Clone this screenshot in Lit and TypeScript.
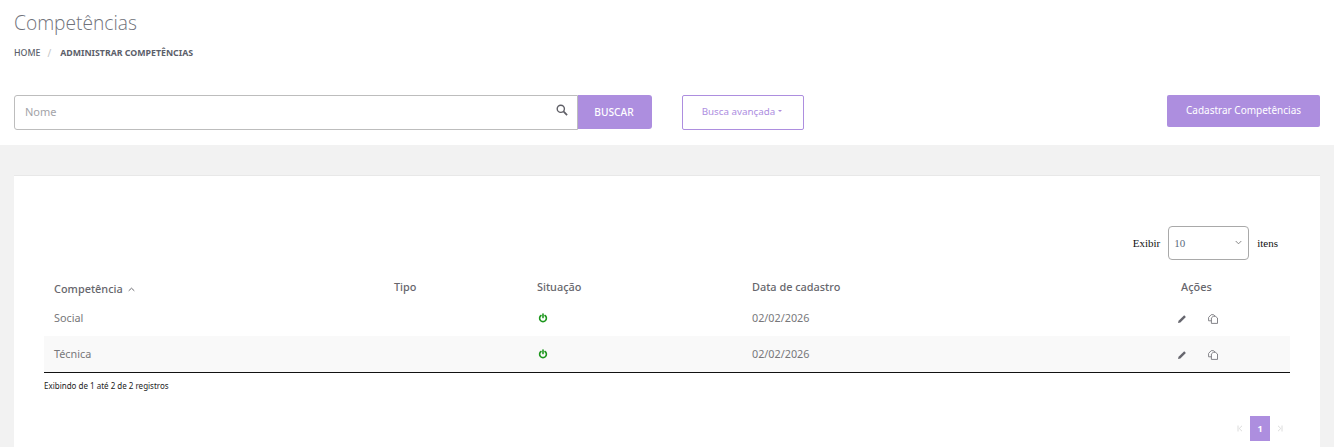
import { LitElement, html, css, svg } from "lit";
import { customElement } from "lit/decorators.js";

const power = svg`<svg class="ic pw" width="10" height="10" viewBox="0 0 10 10" fill="none" stroke="#1c961c" stroke-width="1.6" stroke-linecap="round"><path d="M3 2.5A3.4 3.4 0 1 0 7 2.5"/><path d="M5 1V4.6"/></svg>`;
const pencil = svg`<svg class="ic" width="10" height="10" viewBox="0 0 10 10"><path fill="#66666e" d="M7.2 1.2 8.9 2.9 3.4 8.5 1 9.1 1.6 6.8Z"/></svg>`;
const copy = svg`<svg class="ic" width="10" height="10" viewBox="0 0 10 10" fill="#fff" stroke="#77777d" stroke-width=".9"><path d="M.6 3.4 3.2.7H5.6L7 2.1V6.8H.6Z"/><path d="M3.4 3.9 5.2 2.3H7.4L9.5 4V9.4H3.4Z"/></svg>`;
const search = svg`<svg width="12" height="12" viewBox="0 0 13 13" fill="none" stroke="#5f5f66" stroke-width="1.5"><circle cx="5.2" cy="5.2" r="3.9"/><path stroke-width="1.9" d="M8.1 8.1 12 12"/></svg>`;
const first = svg`<svg width="6" height="7" viewBox="0 0 6 7" fill="none" stroke="#dcdcdc" stroke-width="1"><path d="M1 .5V6.5M5 .8 2.2 3.5 5 6.2"/></svg>`;
const last = svg`<svg width="6" height="7" viewBox="0 0 6 7" fill="none" stroke="#dcdcdc" stroke-width="1"><path d="M5 .5V6.5M1 .8 3.8 3.5 1 6.2"/></svg>`;

const rows = [
  ["Social", "", "02/02/2026"],
  ["Técnica", "", "02/02/2026"],
];

@customElement("app-root")
export class AppRoot extends LitElement {
  static styles = css`
    :host { display: block; height: 447px; overflow: hidden; background: #f2f2f2; font-family: "Noto Sans", sans-serif; color: #6b6b6b; }
    .top { background: #fff; height: 145px; padding: 0 14px; box-sizing: border-box; }
    h1 { margin: 0; padding-top: 10px; font: 300 19.2px/26px "Open Sans", sans-serif; color: #70727a; height: 36px; box-sizing: border-box; }
    .crumbs { display: flex; align-items: center; height: 14px; margin-top: 10px; font-size: 8.8px; font-weight: 500; color: #5c5f6b; }
    .crumbs .sep { margin: 0 9px 0 7px; color: #c4c4c4; font-size: 10px; font-weight: 400; }
    .crumbs b { font-weight: 700; }
    .tools { display: flex; align-items: flex-start; margin-top: 35px; }
    .search { display: flex; width: 564px; height: 35px; box-sizing: border-box; border: 1px solid #bdbdbd; border-radius: 3px 0 0 3px; align-items: center; padding: 0 9px 2px 10px; justify-content: space-between; }
    .ph { font-size: 11px; color: #a3a3a8; }
    .search svg { margin-top: -3px; }
    .buscar { width: 74px; height: 34px; padding-right: 2px; box-sizing: border-box; background: #ad8edf; color: #fff; font-size: 10.2px; font-weight: 500; display: flex; align-items: center; justify-content: center; border-radius: 0 3px 3px 0; }
    .adv { margin-left: 30px; width: 122px; height: 35px; box-sizing: border-box; border: 1px solid #ad8edf; border-radius: 2px; color: #ad8edf; font-size: 9.8px; display: flex; align-items: center; justify-content: center; gap: 3px; padding: 0 2px 3px 0; }
    .caret { width: 0; height: 0; border: 2.5px solid transparent; border-top-color: #ad8edf; border-bottom: 0; }
    .add { margin-left: auto; width: 153px; height: 32px; padding-bottom: 2px; box-sizing: border-box; background: #ad8edf; color: #fff; font-size: 10px; display: flex; align-items: center; justify-content: center; border-radius: 2px; }
    .card { margin: 30px 14px 0; height: 272px; box-sizing: border-box; background: #fff; border-top: 1px solid #e8e8e8; padding: 49px 30px 0; }
    .len { display: flex; justify-content: flex-end; align-items: center; font: 11px "Liberation Serif", serif; color: #111; height: 35px; padding-right: 12px; }
    .sel { width: 81px; height: 34px; box-sizing: border-box; border: 1px solid #a9a9a9; border-radius: 4px; margin: 0 8px; display: flex; align-items: center; justify-content: space-between; padding: 0 6px 0 5px; color: #5b6b80; }
    .grid { display: grid; grid-template-columns: 340px 143px 215px 429px 119px; margin-top: 10px; }
    .row { display: contents; }
    .c { height: 36px; display: flex; align-items: center; padding-left: 10px; padding-bottom: 2px; box-sizing: border-box; font-size: 10.8px; color: #77777a; }
    .h { height: 30px; padding-top: 3px; padding-bottom: 0; font-size: 10.9px; font-weight: 500; color: #66666c; }
    .h.first { padding-top: 7px; }
    .sort { margin-left: 5px; margin-top: 2px; }
    .alt .c { background: #f9f9f9; }
    .acts { gap: 21px; padding-left: 6px; padding-top: 4px; padding-bottom: 2px; }
    .ic { display: block; }
    .pw { margin-left: 1px; margin-top: 2px; }
    .rule { height: 1px; background: #111; }
    .info { font-size: 8px; color: #222; margin-top: 7px; height: 12px; line-height: 12px; }
    .pager { display: flex; justify-content: flex-end; align-items: center; margin-top: 24px; }
    .pager span { width: 20px; height: 25px; display: flex; align-items: center; justify-content: center; }
    .pager .on { background: #ad8edf; color: #fff; font-weight: 700; font-size: 9px; }
  `;
  render() {
    return html`
      <div class="top">
        <h1>Competências</h1>
        <div class="crumbs"><span>HOME</span><span class="sep">/</span><b>ADMINISTRAR COMPETÊNCIAS</b></div>
        <div class="tools">
          <div class="search"><span class="ph">Nome</span>${search}</div>
          <div class="buscar">BUSCAR</div>
          <div class="adv">Busca avançada <i class="caret"></i></div>
          <div class="add">Cadastrar Competências</div>
        </div>
      </div>
      <div class="card">
        <div class="len">Exibir <div class="sel"><span>10</span><svg width="7" height="5" viewBox="0 0 8 5" fill="none" stroke="#777" stroke-width="1"><path d="M.8.8 4 4 7.2.8"/></svg></div> itens</div>
        <div class="grid">
          <div class="c h first">Competência <svg class="sort" width="7" height="5" viewBox="0 0 8 5" fill="none" stroke="#66666c" stroke-width="1.1"><path d="M.8 4 4 1 7.2 4"/></svg></div>
          <div class="c h">Tipo</div>
          <div class="c h">Situação</div>
          <div class="c h">Data de cadastro</div>
          <div class="c h">Ações</div>
          ${rows.map((r, i) => html`
            <div class="row ${i % 2 ? "alt" : ""}">
              <div class="c">${r[0]}</div>
              <div class="c">${r[1]}</div>
              <div class="c">${power}</div>
              <div class="c">${r[2]}</div>
              <div class="c acts">${pencil}${copy}</div>
            </div>`)}
        </div>
        <div class="rule"></div>
        <div class="info">Exibindo de 1 até 2 de 2 registros</div>
        <div class="pager"><span>${first}</span><span class="on">1</span><span>${last}</span></div>
      </div>
    `;
  }
}
